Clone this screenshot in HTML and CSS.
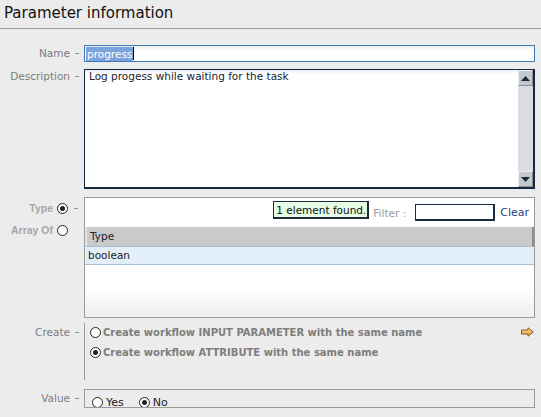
FILE: index.html
```html
<!DOCTYPE html>
<html>
<head>
<meta charset="utf-8">
<link rel="stylesheet" href="styles.css">
</head>
<body>
<div class="title">Parameter information</div>
<div class="form">
  <div class="row row-name">
    <div class="label">Name</div><div class="dash">–</div>
    <div class="field name-input"><span class="sel">progress</span><span class="caret"></span></div>
  </div>
  <div class="row row-desc">
    <div class="label">Description</div><div class="dash">–</div>
    <div class="field desc">
      <div class="desc-text">Log progess while waiting for the task</div>
      <div class="scrollbar">
        <div class="sb-btn"><svg width="9" height="5" viewBox="0 0 9 5"><path d="M0 5 L4.5 0 L9 5 Z" fill="#1c2b3a"/></svg></div>
        <div class="sb-track"></div>
        <div class="sb-btn"><svg width="9" height="5" viewBox="0 0 9 5"><path d="M0 0 L4.5 5 L9 0 Z" fill="#1c2b3a"/></svg></div>
      </div>
    </div>
  </div>
  <div class="row row-type">
    <div class="type-labels">
      <div class="type-line"><span class="dis">Type</span><span class="radio on"></span><span class="dash dash-in">–</span></div>
      <div class="type-line"><span class="dis">Array Of</span><span class="radio"></span><span class="dash dash-in"></span></div>
    </div>
    <div class="field type-panel">
      <div class="filter-row">
        <div class="tip">1 element found.</div>
        <span class="filter-label">Filter :</span>
        <div class="filter-input"></div>
        <span class="clear">Clear</span>
      </div>
      <div class="thead">Type</div>
      <div class="trow">boolean</div>
      <div class="tempty"></div>
    </div>
  </div>
  <div class="row row-create">
    <div class="label">Create</div><div class="dash">–</div>
    <div class="field create">
      <div class="opt"><span class="radio"></span><span class="opt-text">Create workflow INPUT PARAMETER with the same name</span>
        <svg class="arrow" width="13" height="10" viewBox="0 0 13 10"><defs><linearGradient id="g" x1="0" y1="0" x2="0" y2="1"><stop offset="0" stop-color="#fbe0a0"/><stop offset="1" stop-color="#e69a2e"/></linearGradient></defs><path d="M0.5 3 H7 V0.8 L12.3 5 L7 9.2 V7 H0.5 Z" fill="url(#g)" stroke="#8a5a14" stroke-width="1"/></svg>
      </div>
      <div class="opt"><span class="radio on"></span><span class="opt-text">Create workflow ATTRIBUTE with the same name</span></div>
    </div>
  </div>
  <div class="row row-value">
    <div class="label">Value</div><div class="dash">–</div>
    <div class="field value-box">
      <div class="value-inner">
        <span class="radio"></span><span class="val-text">Yes</span>
        <span class="radio on"></span><span class="val-text">No</span>
      </div>
    </div>
  </div>
</div>
</body>
</html>
```
FILE: styles.css
```css
* { box-sizing: border-box; }
html, body { margin: 0; padding: 0; }
body {
  background: #ececec;
  font-family: "DejaVu Sans", sans-serif;
  width: 541px;
  height: 417px;
  overflow: hidden;
}
.title {
  height: 29px;
  border-bottom: 1px solid #9c9c9c;
  font-size: 15px;
  color: #111;
  padding: 4px 0 0 4px;
}
.form { display: flex; flex-direction: column; padding-right: 6px; }
.row { display: flex; align-items: flex-start; }
.label {
  width: 70px;
  text-align: right;
  font-size: 10.5px;
  color: #7c7c7c;
  line-height: 14px;
}
.dash {
  width: 14px;
  text-align: center;
  font-size: 10px;
  color: #7c7c7c;
  line-height: 14px;
}
.field { flex: 1; }
.row-name { margin-top: 16px; }
.row-name .label, .row-name .dash { line-height: 16px; }
.name-input {
  height: 17px;
  border: 1px solid #3f7bb5;
  background: linear-gradient(#ececec, #fff 4px);
  display: flex;
  align-items: center;
  padding-left: 1px;
  font-size: 10.5px;
}
.sel { background: #7ba3dc; color: #fff; padding: 0 1px; line-height: 14px; }
.caret { width: 1px; height: 13px; background: #000; }
.row-desc { margin-top: 7px; }
.row-desc .label, .row-desc .dash { margin-top: 0; }
.desc {
  height: 120px;
  border: 1px solid #152a40;
  border-width: 1px 2px 2px 1px;
  background: #fff;
  display: flex;
}
.desc-text {
  flex: 1;
  font-size: 10.5px;
  color: #1a2330;
  padding: 0 4px;
  background: linear-gradient(#ececec, #fff 4px);
}
.scrollbar {
  width: 15px;
  display: flex;
  flex-direction: column;
  background: #d9dde1;
}
.sb-btn {
  height: 16px;
  background: #c5c8cb;
  border: 1px solid #eef0f2;
  border-right-color: #8a8e93;
  border-bottom-color: #8a8e93;
  display: flex; align-items: center; justify-content: center;
}
.sb-track { flex: 1; }
.row-type { margin-top: 8px; }
.type-labels { width: 84px; padding-top: 0; }
.type-line { display: flex; align-items: center; justify-content: flex-end; height: 22px; }
.dis { font-size: 10.5px; font-weight: bold; color: #a6a6a6; margin-right: 4px; font-family: "Liberation Sans", sans-serif; }
.dash-in { width: 16px; }
.radio {
  display: inline-block;
  width: 11px; height: 11px;
  border: 1px solid #222;
  border-radius: 50%;
  background: #fff;
  position: relative;
  flex: none;
}
.radio.on::after {
  content: "";
  position: absolute;
  left: 2px; top: 2px;
  width: 5px; height: 5px;
  border-radius: 50%;
  background: #222;
}
.type-panel {
  height: 121px;
  border: 1px solid #9a9a9a;
  background: #fff;
  display: flex;
  flex-direction: column;
}
.filter-row {
  height: 29px;
  display: flex;
  align-items: center;
  justify-content: flex-end;
  padding-right: 5px;
}
.tip {
  background: #e4fde4;
  border: 1px solid #1d2b3a;
  border-width: 1px 2px 2px 1px;
  font-size: 10.5px;
  color: #111;
  padding: 1px 1px 0 2px;
  line-height: 14px;
  margin-right: 4px;
  margin-top: -5px;
}
.filter-label { font-size: 10.5px; color: #9a9a9a; margin-right: 9px; }
.filter-input {
  width: 80px; height: 17px;
  border: 1px solid #1a2d40;
  border-width: 1px 2px 2px 1px;
  background: #fff;
  margin-right: 5px;
  margin-top: 0;
}
.clear { font-size: 11px; color: #233c86; }
.thead {
  height: 20px;
  background: #c9cacb;
  border-left: 2px solid #e4e4e4;
  border-right: 2px solid #8c8c8c;
  border-bottom: 1px solid #a8bccd;
  font-size: 10.5px;
  color: #222;
  padding-left: 3px;
  line-height: 19px;
}
.trow {
  height: 18px;
  background: #e2eef8;
  border-bottom: 1px solid #a9c0d3;
  font-size: 10.5px;
  color: #222;
  padding-left: 3px;
  line-height: 17px;
}
.tempty { flex: 1; background: linear-gradient(#fff 40%, #efefef); }
.row-create { margin-top: 5px; }
.row-create .label, .row-create .dash { margin-top: 2px; }
.create {
  height: 57px;
  border-left: 1px solid #9a9a9a;
  padding-left: 5px;
  padding-top: 0;
  display: flex;
  flex-direction: column;
  gap: 2px;
}
.opt { display: flex; align-items: center; height: 18px; gap: 2px; }
.opt-text { font-family: "DejaVu Sans", sans-serif; font-weight: bold; font-size: 10px; color: #7d7d7d; flex: 1; }
.arrow { margin-right: 1px; }
.row-value { margin-top: 9px; }
.row-value .label, .row-value .dash { margin-top: 2px; }
.value-box {
  height: 19px;
  border: 1px solid #9a9a9a;
  overflow: hidden;
}
.value-inner { display: flex; align-items: flex-start; padding: 7px 0 0 7px; }
.val-text { font-size: 11px; color: #222; margin: -1px 15px 0 3px; }
```
